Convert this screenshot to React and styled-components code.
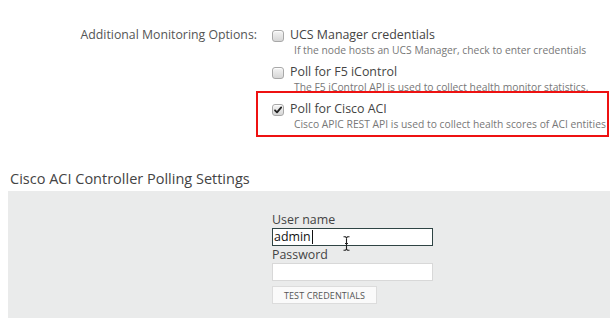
import React from "react";
import styled, { createGlobalStyle } from "styled-components";

const GlobalStyle = createGlobalStyle`
  html, body {
    margin: 0;
    padding: 0;
    background: #ffffff;
  }
  body {
    font-family: "Open Sans", "Liberation Sans", sans-serif;
    color: #444;
    overflow: hidden;
  }
`;

const options = [
  {
    title: "UCS Manager credentials",
    help: "If the node hosts an UCS Manager, check to enter credentials",
    checked: false,
  },
  {
    title: "Poll for F5 iControl",
    help: "The F5 iControl API is used to collect health monitor statistics.",
    checked: false,
  },
  {
    title: "Poll for Cisco ACI",
    help: "Cisco APIC REST API is used to collect health scores of ACI entities",
    checked: true,
    highlight: true,
  },
];

const Checkbox = ({ checked }) => (
  <Box>
    {checked && (
      <svg width="10" height="10" viewBox="0 0 10 10">
        <path
          d="M2 5.3 L4 7.4 L8.2 2.4"
          fill="none"
          stroke="#222"
          strokeWidth="1.8"
          strokeLinecap="round"
          strokeLinejoin="round"
        />
      </svg>
    )}
  </Box>
);

const Option = ({ data }) => {
  const body = (
    <OptionBlock>
      <TitleRow>
        <Checkbox checked={data.checked} />
        <Title>{data.title}</Title>
      </TitleRow>
      <Help>{data.help}</Help>
    </OptionBlock>
  );
  return data.highlight ? <Highlight>{body}</Highlight> : body;
};

const IBeam = () => (
  <Cursor width="7" height="15" viewBox="0 0 7 15">
    <path
      d="M0.5 0.8 H2.5 L3.5 1.8 L4.5 0.8 H6.5 M3.5 1.8 V13.2 M0.5 14.2 H2.5 L3.5 13.2 L4.5 14.2 H6.5 M2 7.5 H5"
      fill="none"
      stroke="#222"
      strokeWidth="1.1"
    />
  </Cursor>
);

export default function App() {
  return (
    <>
      <GlobalStyle />
      <Page>
        <FormRow>
          <Label>Additional Monitoring Options:</Label>
          <Options>
            {options.map(o => (
              <Option key={o.title} data={o} />
            ))}
          </Options>
        </FormRow>
        <Heading>Cisco ACI Controller Polling Settings</Heading>
        <Panel>
          <Fields>
            <FieldLabel>User name</FieldLabel>
            <InputWrap>
              <TextInput focused>
                admin
                <Caret />
              </TextInput>
              <IBeam />
            </InputWrap>
            <FieldLabel>Password</FieldLabel>
            <TextInput />
            <Button>Test credentials</Button>
          </Fields>
        </Panel>
      </Page>
    </>
  );
}

const Page = styled.div`
  width: 610px;
  height: 318px;
  padding: 27px 0 0 8px;
  box-sizing: border-box;
  display: flex;
  flex-direction: column;
`;

const FormRow = styled.div`
  display: grid;
  grid-template-columns: 249px 1fr;
  column-gap: 15px;
`;

const Label = styled.div`
  text-align: right;
  font-size: 12.3px;
  line-height: 16px;
  color: #555;
`;

const Options = styled.div`
  display: flex;
  flex-direction: column;
  min-width: 0;
`;

const OptionBlock = styled.div`
  display: flex;
  flex-direction: column;
  margin-bottom: 8px;
`;

const Highlight = styled.div`
  margin: -10px 1px 0 -16px;
  padding: 8px 0 0 14px;
  border: 2px solid #ee1111;
  box-sizing: border-box;
  height: 46px;

  ${OptionBlock} {
    margin-bottom: 0;
  }
`;

const TitleRow = styled.div`
  display: flex;
  align-items: center;
  gap: 6px;
`;

const Box = styled.span`
  width: 12px;
  height: 12px;
  box-sizing: border-box;
  border: 1px solid #a8a8a8;
  border-radius: 3px;
  background: linear-gradient(#f4f4f4, #d6d6d6);
  box-shadow: inset 0 1px 1px rgba(255, 255, 255, 0.8);
  display: flex;
  align-items: center;
  justify-content: center;
  flex-shrink: 0;
  margin-top: 1px;
`;

const Title = styled.span`
  font-size: 12.4px;
  line-height: 16px;
  color: #444;
`;

const Help = styled.div`
  margin-left: 22px;
  margin-top: 1px;
  font-size: 10.3px;
  line-height: 12px;
  color: #777;
  white-space: nowrap;
`;

const Heading = styled.h2`
  margin: 32px 0 2px 2px;
  font-size: 14.5px;
  line-height: 20px;
  font-weight: 400;
  color: #444;
`;

const Panel = styled.div`
  flex: 1;
  background: #eaebeb;
  padding: 21px 0 0 264px;
`;

const Fields = styled.div`
  display: flex;
  flex-direction: column;
  align-items: flex-start;
  width: 161px;
`;

const FieldLabel = styled.div`
  font-size: 12.4px;
  line-height: 15px;
  color: #444;
  margin-bottom: 1px;
`;

const InputWrap = styled.div`
  position: relative;
  margin-bottom: 1px;
`;

const TextInput = styled.div`
  width: 161px;
  height: 18px;
  box-sizing: border-box;
  background: #fff;
  border: 1px solid ${p => (p.focused ? "#2f4444" : "#d8d8d8")};
  font-size: 12.4px;
  line-height: 16px;
  color: #111;
  padding-left: 1px;
  display: flex;
  align-items: center;
  margin-bottom: 5px;
  ${InputWrap} & {
    margin-bottom: 0;
  }
`;

const Caret = styled.span`
  width: 1px;
  height: 14px;
  background: #111;
  margin-left: 1px;
`;

const Cursor = styled.svg`
  position: absolute;
  left: 71px;
  top: 8px;
`;

const Button = styled.button`
  height: 18px;
  width: 105px;
  padding: 0;
  background: #fafafa;
  border: 1px solid #dcdcdc;
  border-radius: 0;
  font-family: "Open Sans", "Liberation Sans", sans-serif;
  font-size: 9px;
  text-transform: uppercase;
  color: #555;
  letter-spacing: 0.1px;
`;
